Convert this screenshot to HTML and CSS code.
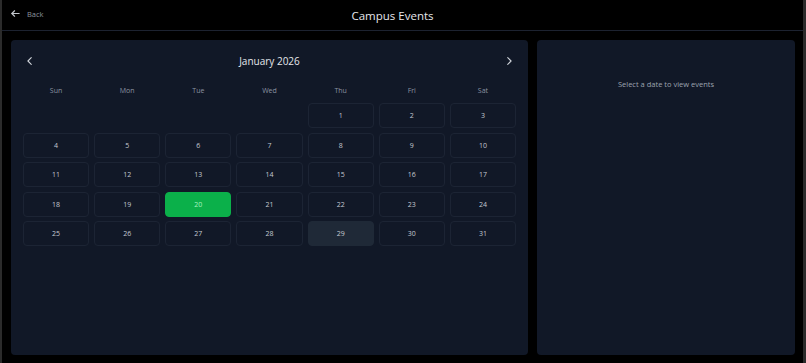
FILE: index.html
```html
<!DOCTYPE html>
<html lang="en">
<head>
<meta charset="UTF-8">
<meta name="viewport" content="width=device-width, initial-scale=1.0">
<title>Campus Events</title>
<link rel="stylesheet" href="styles.css">
</head>
<body>
  <div id="app">
    <header class="topbar">
      <a class="back" href="#">
        <svg width="11" height="11" viewBox="0 0 24 24" fill="none" stroke="currentColor" stroke-width="2.4" stroke-linecap="round" stroke-linejoin="round"><path d="M20 12H4"/><path d="M10 6l-6 6 6 6"/></svg>
        <span>Back</span>
      </a>
      <h1>Campus Events</h1>
    </header>
    <main class="content">
      <section class="calendar">
        <div class="cal-head">
          <button class="nav"><svg width="10" height="10" viewBox="0 0 24 24" fill="none" stroke="currentColor" stroke-width="2.6" stroke-linecap="round" stroke-linejoin="round"><path d="M15 4l-8 8 8 8"/></svg></button>
          <h2>January 2026</h2>
          <button class="nav"><svg width="10" height="10" viewBox="0 0 24 24" fill="none" stroke="currentColor" stroke-width="2.6" stroke-linecap="round" stroke-linejoin="round"><path d="M9 4l8 8-8 8"/></svg></button>
        </div>
        <div class="weekdays">
          <span>Sun</span><span>Mon</span><span>Tue</span><span>Wed</span><span>Thu</span><span>Fri</span><span>Sat</span>
        </div>
        <div class="days" id="days"></div>
      </section>
      <aside class="events">
        <p>Select a date to view events</p>
      </aside>
    </main>
  </div>

  <script>
const days = document.getElementById('days');
const firstDay = 4;
for (let i = 0; i < firstDay; i++) {
  const empty = document.createElement('div');
  empty.className = 'day empty';
  days.appendChild(empty);
}
for (let d = 1; d <= 31; d++) {
  const cell = document.createElement('div');
  cell.className = 'day';
  if (d === 20) cell.className += ' selected';
  if (d === 29) cell.className += ' today';
  cell.textContent = d;
  days.appendChild(cell);
}
  </script>
</body>
</html>
```

FILE: styles.css
```css
html, body {
  margin: 0;
  padding: 0;
  height: 100%;
}
body {
  background-color: #2b2b2b;
  font-family: "Open Sans", "Noto Sans", sans-serif;
  color: #d1d5db;
}
#app {
  margin: 0 3px 0 2px;
  height: 100%;
  background-color: #000;
  display: flex;
  flex-direction: column;
}
.topbar {
  height: 30px;
  border-bottom: 1px solid #1c2230;
  display: flex;
  align-items: center;
  justify-content: center;
  padding-right: 20px;
  position: relative;
}
.back {
  position: absolute;
  left: 8px;
  top: 8px;
  display: flex;
  align-items: center;
  gap: 6px;
  color: #8b929c;
  text-decoration: none;
  font-size: 7.5px;
}
.back svg {
  color: #c4c8ce;
}
.topbar h1 {
  margin: 0;
  font-size: 11.5px;
  font-weight: 400;
  color: #e5e7eb;
}
.content {
  flex: 1;
  display: flex;
  gap: 9px;
  padding: 9px 8px 8px 9px;
}
.calendar, .events {
  background-color: #111827;
  border-radius: 4px;
}
.calendar {
  width: 517px;
  padding: 8px 12px;
  box-sizing: border-box;
}
.events {
  flex: 1;
  display: flex;
  justify-content: center;
}
.events p {
  margin: 39px 0 0;
  font-size: 7.5px;
  color: #9ca3af;
}
.cal-head {
  display: flex;
  align-items: center;
  justify-content: space-between;
  height: 25px;
}
.nav {
  background: none;
  border: none;
  color: #d1d5db;
  padding: 0 2px;
  display: flex;
  cursor: pointer;
}
.cal-head h2 {
  margin: 0;
  font-size: 10px;
  font-weight: 400;
  color: #e5e7eb;
}
.weekdays {
  display: grid;
  grid-template-columns: repeat(7, 1fr);
  gap: 5px;
  margin-top: 9px;
  height: 16px;
  align-items: center;
}
.weekdays span {
  text-align: center;
  font-size: 7px;
  color: #8b93a1;
}
.days {
  display: grid;
  grid-template-columns: repeat(7, 1fr);
  gap: 4.5px 5px;
  margin-top: 5px;
}
.day {
  height: 25px;
  border: 1px solid #1c2434;
  border-radius: 4px;
  box-sizing: border-box;
  display: flex;
  align-items: center;
  justify-content: center;
  font-size: 7px;
  color: #c4c9d1;
}
.day.empty {
  border-color: transparent;
}
.day.selected {
  background-color: #0bb04a;
  border-color: #0bb04a;
  color: #a7f3c0;
}
.day.today {
  background-color: #1f2937;
  border-color: #1f2937;
}
```
